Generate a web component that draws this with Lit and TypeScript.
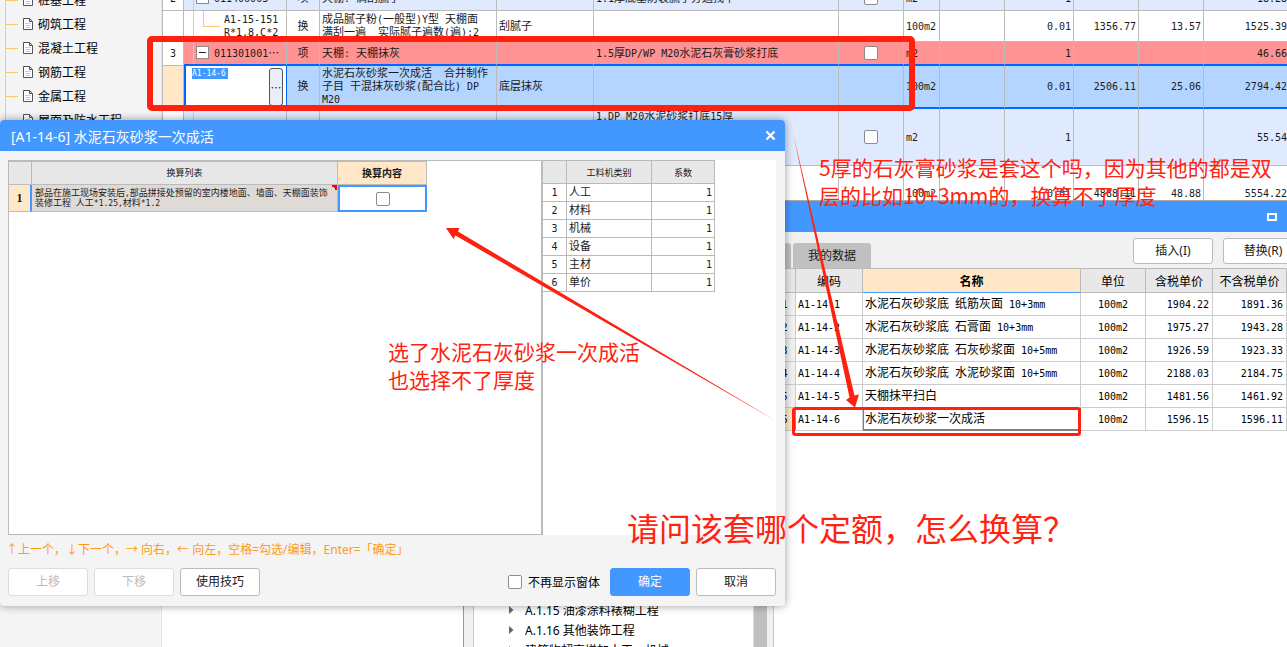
import { LitElement, html, css, svg, nothing } from "lit";
import { customElement } from "lit/decorators.js";

// Half-width runs are set in the monospaced face, the rest in the CJK face.
const mixed = (s: string) =>
  s.split(/([\x20-\x7e]+)/).map((p) => (/^[\x20-\x7e]+$/.test(p) ? html`<span class="lat">${p}</span>` : p));

const SECTIONS = ["桩基工程", "砌筑工程", "混凝土工程", "钢筋工程", "金属工程", "屋面及防水工程"];

interface Item {
  no: string; kind: string; code: string; type: string; name: string; use: string; feature: string;
  check: boolean; unit: string; qty: string; p1: string; p2: string; p3: string; p4: string;
}
const ITEMS: Item[] = [
  { no: "2", kind: "group r1", code: "011406003", type: "项", name: "天棚: 满刮腻子", use: "", feature: "1.1厚底基防裂腻子分遍找平", check: true, unit: "m2", qty: "", p1: "1", p2: "", p3: "", p4: "18.28" },
  { no: "", kind: "child r2", code: "A1-15-151\nR*1.8,C*2", type: "换", name: "成品腻子粉(一般型)Y型 天棚面\n满刮一遍  实际腻子遍数(遍):2", use: "刮腻子", feature: "", check: false, unit: "100m2", qty: "", p1: "0.01", p2: "1356.77", p3: "13.57", p4: "1525.39" },
  { no: "3", kind: "group r3", code: "011301001…", type: "项", name: "天棚: 天棚抹灰", use: "", feature: "1.5厚DP/WP M20水泥石灰膏砂浆打底", check: true, unit: "m2", qty: "", p1: "1", p2: "", p3: "", p4: "46.66" },
  { no: "", kind: "edit r4", code: "A1-14-6", type: "换", name: "水泥石灰砂浆一次成活  合并制作\n子目 干混抹灰砂浆(配合比) DP\nM20", use: "底层抹灰", feature: "", check: false, unit: "100m2", qty: "", p1: "0.01", p2: "2506.11", p3: "25.06", p4: "2794.42" },
  { no: "", kind: "group r5", code: "", type: "", name: "", use: "", feature: "1.DP M20水泥砂浆打底15厚", check: true, unit: "m2", qty: "", p1: "1", p2: "", p3: "", p4: "55.54" },
  { no: "", kind: "child r6", code: "", type: "", name: "", use: "", feature: "", check: false, unit: "100m2", qty: "", p1: "0.01", p2: "4888.11", p3: "48.88", p4: "5554.22" },
];

const QUOTAS = [
  ["A1-14-1", "水泥石灰砂浆底 纸筋灰面 10+3mm", "1904.22", "1891.36"],
  ["A1-14-2", "水泥石灰砂浆底 石膏面 10+3mm", "1975.27", "1943.28"],
  ["A1-14-3", "水泥石灰砂浆底 石灰砂浆面 10+5mm", "1926.59", "1923.33"],
  ["A1-14-4", "水泥石灰砂浆底 水泥砂浆面 10+5mm", "2188.03", "2184.75"],
  ["A1-14-5", "天棚抹平扫白", "1481.56", "1461.92"],
  ["A1-14-6", "水泥石灰砂浆一次成活", "1596.15", "1596.11"],
];

const shared = css`
  * { box-sizing: border-box; }
  :host { display: block; font-family: "Noto Sans", "Noto Sans CJK SC", sans-serif; font-size: 12px; color: #1a1a1a; }
  table { border-collapse: separate; border-spacing: 0; table-layout: fixed; width: 100%; }
  td, th { padding: 0 2px; font-weight: 400; white-space: pre; overflow: hidden; border: 0 solid #bbb; border-width: 0 1px 1px 0; }
  .lat { font-family: "DejaVu Sans Mono", monospace; font-size: 10px; line-height: 1; }
  .num { text-align: right; }
  .mid { text-align: center; }
  button { font: inherit; color: inherit; background: #fff; border: 1px solid #bbb; border-radius: 3px; padding: 0; width: 80px; height: 28px; line-height: 18px; flex: none; }
  input[type="checkbox"] { appearance: none; width: 14px; height: 14px; margin: 0; border: 1px solid #8c8c8c; border-radius: 2px; background: #fff; vertical-align: middle; flex: none; }
`;

@customElement("section-tree")
class SectionTree extends LitElement {
  static styles = [shared, css`
    :host { background: #f4f4f4; border-right: 1px solid #e6e6e6; overflow: hidden; }
    ul { list-style: none; margin: -12px 0 0; padding: 0 0 0 5px; }
    li { display: flex; align-items: center; height: 24px; gap: 4px; border-left: 1px solid #ffc66e; color: #000; white-space: nowrap; }
    li::before { content: ""; width: 12px; height: 1px; background: #ffc66e; }
    svg { width: 12px; height: 14px; }
  `];
  render() {
    return html`<ul>${SECTIONS.map((s) => html`<li>
      <svg viewBox="0 0 12 14" fill="none" stroke="#555"><path d="M1.5 1.5h6l3 3v8h-9zM7.5 1.5v3h3" fill="#fff"/><path d="M3.5 6.5h5M3.5 8.5h5M3.5 10.5h5" stroke="#ccc"/></svg>
      <span>${s}</span></li>`)}</ul>`;
  }
}

@customElement("bill-table")
class BillTable extends LitElement {
  static styles = [shared, css`
    :host { flex: 1; min-width: 0; overflow: hidden; background: #fff; }
    table { margin-top: -13px; border-left: 1px solid #bbb; font-family: "Noto Sans CJK SC", sans-serif; font-size: 11px; line-height: 13px; }
    td { padding-bottom: 2px; }
    td:last-child { border-right: 0; padding-right: 0; }
    .c-no { width: 21px; } .c-code { width: 103px; } .c-type { width: 33px; } .c-name { width: 177px; } .c-use { width: 97px; }
    .c-feat { width: 245px; } .c-chk { width: 65px; } .c-unit { width: 36px; } .c-m { width: 65px; } .c-q { width: 69px; }
    .group td { background-color: #dfeaff; }
    .group .no { background-color: #fff; }
    .r1 td { height: 24px; } .r2 td { height: 31px; } .r3 td { height: 24px; } .r4 td { height: 43px; } .r5 td { height: 57px; } .r6 td { height: 55px; }
    .r3 td { background-color: #ff9393; border-bottom: 2px solid #0066ff; }
    .r3 .no { border-bottom: 1px solid #bbb; }
    .r4 td { background-color: #b3d5ff; border-bottom: 2px solid #0066ff; }
    .r4 .no { background-color: #ffe7c8; }
    .r4 .code { background: #fff; padding: 0; border-left: 2px solid #0066ff; border-right-color: #0066ff; }
    .r5 .feature { vertical-align: top; }
    .group .code { padding-left: 12px; background-image: linear-gradient(#ffc66e, #ffc66e), linear-gradient(#ffc66e, #ffc66e); background-size: 1px 100%, 4px 1px; background-position: 9px 0, 9px 50%; background-repeat: no-repeat; }
    .r5 .code { background-size: 1px 100%, 0 0; }
    .child .code { padding-left: 40px; background-image: linear-gradient(#ffc66e, #ffc66e), linear-gradient(#ffc66e, #ffc66e), linear-gradient(#ffc66e, #ffc66e); background-size: 1px 100%, 1px 50%, 17px 1px; background-position: 9px 0, 19px 0, 19px 50%; background-repeat: no-repeat; }
    .codebox { display: flex; align-items: center; gap: 5px; }
    .fold { width: 13px; height: 13px; border: 1px solid #8c8c8c; border-radius: 0; display: grid; place-items: center; }
    .fold::before { content: ""; width: 7px; height: 1px; background: #222; }
    .editor { display: flex; justify-content: space-between; align-items: flex-start; padding: 1px 3px 1px 6px; }
    .editor input { width: 36px; height: 11px; padding: 0; border: 0; background: #4398ff; color: #fff; font: 8px "DejaVu Sans Mono", monospace; outline: none; }
    .editor button { width: 14px; height: 38px; background: #e9eef8; border-color: #555; line-height: 10px; }
  `];
  private code(r: Item) {
    if (r.kind.startsWith("edit"))
      return html`<div class="editor"><input type="text" aria-label="编码" .value=${r.code}><button aria-label="选择">…</button></div>`;
    if (r.kind.startsWith("group") && r.code)
      return html`<div class="codebox"><button class="fold" aria-label="折叠"></button><span>${mixed(r.code)}</span></div>`;
    return mixed(r.code);
  }
  render() {
    return html`<table lang="zh-CN">
      <colgroup><col class="c-no"><col class="c-code"><col class="c-type"><col class="c-name"><col class="c-use"><col class="c-feat"><col class="c-chk"><col class="c-unit"><col class="c-m"><col class="c-q"><col class="c-m"><col class="c-m"><col></colgroup>
      <tbody>${ITEMS.map((r) => html`<tr class=${r.kind}>
        <td class="no mid">${mixed(r.no)}</td><td class="code">${this.code(r)}</td><td class="mid">${r.type}</td>
        <td>${mixed(r.name)}</td><td>${r.use}</td><td class="feature">${mixed(r.feature)}</td>
        <td class="mid">${r.check ? html`<input type="checkbox" aria-label="选中">` : nothing}</td>
        <td>${mixed(r.unit)}</td><td class="num">${mixed(r.qty)}</td><td class="num">${mixed(r.p1)}</td>
        <td class="num">${mixed(r.p2)}</td><td class="num">${mixed(r.p3)}</td><td class="num">${mixed(r.p4)}</td></tr>`)}</tbody>
    </table>`;
  }
}

@customElement("quota-window")
class QuotaWindow extends LitElement {
  static styles = [shared, css`
    :host { display: flex; flex-direction: column; background: #f1f1f1; border-left: 1px solid #999; border-top: 1px solid #aaa; overflow: hidden; }
    header { height: 31px; flex: none; background: #4398ff; display: flex; justify-content: flex-end; align-items: center; padding-right: 10px; }
    header button { width: 10px; height: 8px; border: 2px solid #fff; border-radius: 0; background: none; }
    .body { flex: 1; min-height: 0; display: flex; padding-left: 9px; }
    .tree { width: 294px; flex: none; display: flex; background: #fff; border-left: 1px solid #c8c8c8; overflow: hidden; }
    ul { flex: 1; list-style: none; margin: 0; padding: 368px 0 0 35px; color: #000; }
    li { display: flex; align-items: center; gap: 11px; height: 20px; white-space: nowrap; }
    li svg { width: 5px; height: 8px; }
    .scroll { width: 14px; background: #c0c0c0; border-left: 1px solid #ddd; }
    .main { flex: 1; min-width: 0; display: flex; flex-direction: column; background: #fff; border-left: 1px solid #c8c8c8; margin-left: 6px; }
    .bar { display: flex; height: 37px; flex: none; background: #f1f1f1; align-items: flex-end; gap: 2px; border-bottom: 1px solid #bbb; }
    .tab { background: #c0c0c0; height: 25px; border: 0; border-radius: 3px 3px 0 0; width: 78px; }
    .tab.first { width: 17px; }
    .actions { display: flex; gap: 10px; margin: 0 -16px 4px auto; }
    .actions button { height: 26px; }
    .c-no { width: 22px; } .c-code { width: 67px; } .c-name { width: 218px; } .c-unit { width: 65px; } .c-p { width: 67px; }
    th { height: 24px; background: #e8e8e8; color: #000; padding: 0; }
    th.on { background: #ffe7c8; border-bottom-color: #4398ff; font-weight: 700; }
    td { height: 23px; padding-bottom: 2px; border-color: #ccc; color: #000; line-height: 14px; font-family: "Noto Sans CJK SC", sans-serif; }
    td:first-child { background: #f1f1f1; }
    .sel td:first-child { background: #ffe7c8; border-right-color: #4398ff; }
    .sel .name { border: 1px solid #808080; border-width: 1px 2px 2px 1px; padding-left: 1px; }
    td.num { padding-right: 3px; }
  `];
  render() {
    return html`
      <header><button aria-label="最大化"></button></header>
      <div class="body">
        <div class="tree">
          <ul>${["A.1.15 油漆涂料裱糊工程", "A.1.16 其他装饰工程", "建筑物超高增加人工、机械"].map((t) => html`<li>
            <svg viewBox="0 0 5 8"><path d="M0 0l4.5 4L0 8z" fill="#666"/></svg>${t}</li>`)}</ul>
          <div class="scroll"></div>
        </div>
        <div class="main">
          <div class="bar"><button class="tab first" aria-label="查询"></button><button class="tab">我的数据</button>
            <div class="actions"><button>插入(I)</button><button>替换(R)</button></div></div>
          <table>
            <colgroup><col class="c-no"><col class="c-code"><col class="c-name"><col class="c-unit"><col class="c-p"><col></colgroup>
            <thead><tr><th></th><th>编码</th><th class="on">名称</th><th>单位</th><th>含税单价</th><th>不含税单价</th></tr></thead>
            <tbody>${QUOTAS.map((q, i) => html`<tr class=${i === 5 ? "sel" : ""}>
              <td class="mid">${mixed(String(i + 1))}</td><td>${mixed(q[0])}</td><td class="name">${mixed(q[1])}</td>
              <td class="mid">${mixed("100m2")}</td><td class="num">${mixed(q[2])}</td><td class="num">${mixed(q[3])}</td></tr>`)}</tbody>
          </table>
        </div>
      </div>`;
  }
}

@customElement("convert-dialog")
class ConvertDialog extends LitElement {
  static styles = [shared, css`
    :host { display: flex; flex-direction: column; background: #f4f4f4; border-radius: 4px; box-shadow: 0 0 8px rgba(0, 0, 0, 0.4); overflow: hidden; }
    header { height: 31px; flex: none; background: #4398ff; color: #fff; display: flex; align-items: center; justify-content: space-between; padding: 0 9px 0 11px; font-size: 14px; }
    header button { width: 11px; height: 11px; border: 0; background: none; display: grid; }
    header svg { width: 11px; height: 11px; }
    h2 { margin: 0; font-size: 14px; font-weight: 400; }
    .panes { flex: 1; display: flex; margin: 9px 9px 0 8px; min-height: 0; }
    .left { width: 535px; border: 1px solid #bbb; border-right-width: 2px; background: #fff; }
    .right { flex: 1; background: #fff; }
    table { font-family: "Noto Sans CJK SC", sans-serif; }
    .conv { width: 418px; font-size: 9px; line-height: 10px; border-top: 1px solid #bbb; }
    .conv .lat { font-size: 8px; }
    .k1 { width: 23px; } .k2 { width: 306px; }
    th { background: #e8e8e8; height: 23px; padding: 0; }
    th.on { background: #ffe7c8; font-weight: 700; font-size: 10px; }
    .conv td { height: 27px; background: #e0dad7; }
    .conv .no { background: #ffe7c8; border-right: 2px solid #4398ff; padding: 0; }
    .conv .no b { font: 700 12px "Liberation Serif", serif; }
    .conv .flag { padding-left: 3px; background-image: linear-gradient(45deg, transparent 50%, #f00 50%); background-size: 6px 6px; background-position: 100% 0; background-repeat: no-repeat; }
    .conv .cell { background: #fff; border: 2px solid #4398ff; }
    .coef { width: 172px; border-top: 1px solid #bbb; font-size: 11px; line-height: 13px; }
    .coef th { height: 23px; font-size: 9px; }
    .coef td { height: 18px; padding-bottom: 2px; }
    .m1 { width: 24px; } .m2 { width: 85px; }
    .hint { margin: 5px 6px 0; height: 20px; line-height: 20px; color: #ff9a14; white-space: pre; }
    footer { display: flex; align-items: center; gap: 6px; padding: 8px 9px 10px 8px; }
    footer button:disabled { color: #bbb; border-color: #ddd; }
    .primary { background: #4398ff; border-color: #4398ff; color: #fff; }
    label { display: flex; align-items: center; gap: 6px; margin: 0 4px 0 auto; color: #000; }
  `];
  render() {
    return html`
      <header><h2>[A1-14-6] 水泥石灰砂浆一次成活</h2>
        <button aria-label="关闭"><svg viewBox="0 0 11 11"><path d="M1.500 1.500l8 8M9.500 1.500l-8 8" stroke="#fff" stroke-width="2.200"/></svg></button></header>
      <div class="panes">
        <div class="left"><table class="conv">
          <colgroup><col class="k1"><col class="k2"><col></colgroup>
          <thead><tr><th></th><th>换算列表</th><th class="on">换算内容</th></tr></thead>
          <tbody><tr><td class="no mid"><b>1</b></td>
            <td class="flag">${mixed("部品在施工现场安装后,部品拼接处预留的室内楼地面、墙面、天棚面装饰\n装修工程 人工*1.25,材料*1.2")}</td>
            <td class="cell mid"><input type="checkbox" aria-label="换算内容"></td></tr></tbody>
        </table></div>
        <div class="right"><table class="coef">
          <colgroup><col class="m1"><col class="m2"><col></colgroup>
          <thead><tr><th></th><th>工料机类别</th><th>系数</th></tr></thead>
          <tbody>${["人工", "材料", "机械", "设备", "主材", "单价"].map((n, i) => html`<tr><td class="mid">${mixed(String(i + 1))}</td><td>${n}</td><td class="num">${mixed("1")}</td></tr>`)}</tbody>
        </table></div>
      </div>
      <div class="hint">↑上一个，↓下一个，→ 向右，← 向左，空格=勾选/编辑，Enter=「确定」</div>
      <footer><button disabled>上移</button><button disabled>下移</button><button>使用技巧</button>
        <label><input type="checkbox">不再显示窗体</label><button class="primary">确定</button><button>取消</button></footer>`;
  }
}

@customElement("app-root")
class AppRoot extends LitElement {
  static styles = [shared, css`
    :host { position: relative; height: 100vh; overflow: hidden; background: #fff; }
    .page { display: flex; height: 100%; }
    section-tree { width: 162px; flex: none; }
    quota-window { position: absolute; left: 463px; top: 200px; right: 0; bottom: 0; }
    convert-dialog { position: absolute; left: 0; top: 120px; width: 785px; height: 486px; }
    .marks { position: absolute; left: 0; top: 0; width: 1287px; height: 647px; pointer-events: none; }
    .note { position: absolute; margin: 0; color: #ff2412; font-family: "Noto Sans CJK SC", sans-serif; font-size: 21px; line-height: 28px; white-space: pre; }
    .n1 { left: 819px; top: 153px; }
    .n2 { left: 388px; top: 337px; }
    .n3 { left: 627px; top: 507px; font-size: 32px; line-height: 40px; }
  `];
  render() {
    return html`
      <div class="page"><section-tree></section-tree><bill-table></bill-table></div>
      <quota-window></quota-window>
      <convert-dialog></convert-dialog>
      <svg class="marks" viewBox="0 0 1287 647" fill="none" stroke="#ff2010">${svg`
        <rect x="150" y="39" width="762" height="69" rx="2" stroke-width="6"/>
        <rect x="793.5" y="408.500" width="286" height="26" rx="2" stroke-width="3"/>
        <path stroke="none" fill="#ff2010" d="M446 228L459.500 228L458 231.500L776 421L455.500 235.500L453.500 239z"/>
        <path stroke="none" fill="#ff2010" d="M855 407.500L846 400L849.500 397.500L793 133L854.500 395.500L859 394.500z"/>`}</svg>
      <p class="note n1">5厚的石灰膏砂浆是套这个吗，因为其他的都是双<br>层的比如10+3mm的，换算不了厚度</p>
      <p class="note n2">选了水泥石灰砂浆一次成活<br>也选择不了厚度</p>
      <p class="note n3">请问该套哪个定额，怎么换算？</p>`;
  }
}
